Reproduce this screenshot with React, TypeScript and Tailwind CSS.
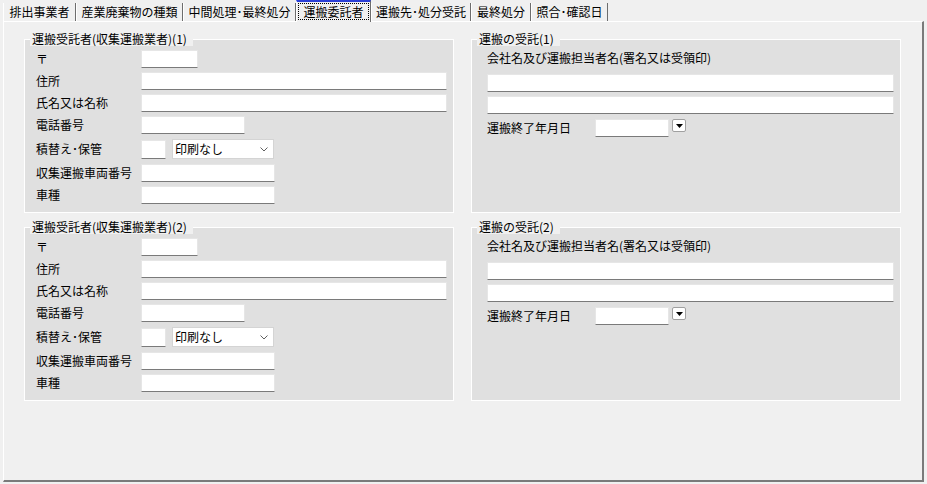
import React from "react";

const FONT = { fontFamily: '"Noto Sans CJK JP", "Noto Sans", sans-serif' };

function Field({ className }: { className: string }) {
  return <div className={"bg-white border border-[#e6e6e6] border-b-[#7a7a7a] " + className} />;
}

function Chevron() {
  return (
    <svg width="8" height="5" viewBox="0 0 8 5">
      <polyline points="0.5,0.5 4,4 7.5,0.5" fill="none" stroke="#606060" strokeWidth="1" />
    </svg>
  );
}

function GroupBox({ title, children }: { title: string; children: React.ReactNode }) {
  return (
    <div className="relative h-[174px] border border-white bg-[#e0e0e0]">
      <div className="absolute -top-[8px] left-[5px] bg-[#f0f0f0] pl-[2px] pr-[6px] text-[12px] leading-[14px] text-black whitespace-nowrap">
        {title}
      </div>
      {children}
    </div>
  );
}

function Row({ label, children, className }: { label: string; children: React.ReactNode; className: string }) {
  return (
    <div className={"flex items-center " + className}>
      <div className="w-[105px] text-[12px] leading-[14px] whitespace-nowrap">{label}</div>
      {children}
    </div>
  );
}

function LeftBox({ title }: { title: string }) {
  return (
    <GroupBox title={title}>
      <div className="flex flex-col pt-[10px] pl-[11px]">
        <Row label="〒" className="h-[18px]">
          <Field className="h-[18px] w-[57px]" />
        </Row>
        <Row label="住所" className="h-[18px] mt-[4px]">
          <Field className="h-[18px] w-[306px]" />
        </Row>
        <Row label="氏名又は名称" className="h-[18px] mt-[4px]">
          <Field className="h-[18px] w-[306px]" />
        </Row>
        <Row label="電話番号" className="h-[18px] mt-[4px]">
          <Field className="h-[18px] w-[104px]" />
        </Row>
        <Row label="積替え･保管" className="h-[20px] mt-[5px]">
          <Field className="h-[19px] w-[25px]" />
          <div className="ml-[6px] h-[20px] w-[102px] bg-white border border-[#d4d4d4] flex items-center justify-between pl-[2px] pr-[5px]">
            <span className="text-[12px] leading-[14px]">印刷なし</span>
            <Chevron />
          </div>
        </Row>
        <Row label="収集運搬車両番号" className="h-[18px] mt-[5px]">
          <Field className="h-[18px] w-[134px]" />
        </Row>
        <Row label="車種" className="h-[18px] mt-[4px]">
          <Field className="h-[18px] w-[134px]" />
        </Row>
      </div>
    </GroupBox>
  );
}

function RightBox({ title }: { title: string }) {
  return (
    <GroupBox title={title}>
      <div className="flex flex-col pt-[11px] pl-[15px]">
        <div className="text-[12px] leading-[14px] whitespace-nowrap">会社名及び運搬担当者名(署名又は受領印)</div>
        <Field className="mt-[9px] h-[18px] w-[407px]" />
        <Field className="mt-[4px] h-[18px] w-[407px]" />
        <div className="mt-[5px] flex items-start">
          <div className="w-[108px] h-[18px] flex items-center text-[12px] leading-[14px] whitespace-nowrap">運搬終了年月日</div>
          <Field className="h-[18px] w-[74px]" />
          <div className="ml-[3px] w-[14px] h-[13px] rounded-[2px] border border-[#a0a0a0] bg-white flex items-center justify-center">
            <svg width="7" height="4" viewBox="0 0 7 4">
              <polygon points="0,0 7,0 3.5,4" fill="#000" />
            </svg>
          </div>
        </div>
      </div>
    </GroupBox>
  );
}

function Tab({ label, className }: { label: string; className: string }) {
  return (
    <div className={"h-[18px] flex items-center justify-center border-l border-white border-r border-r-[#6d6d6d] text-[12px] leading-[14px] whitespace-nowrap " + className}>
      {label}
    </div>
  );
}

export default function App() {
  return (
    <div className="w-[927px] h-[484px] bg-[#f0f0f0] text-black overflow-hidden" style={FONT}>
      <div className="h-[21px] flex items-end pl-[3px] relative z-10">
        <Tab label="排出事業者" className="w-[73px]" />
        <Tab label="産業廃棄物の種類" className="w-[107px]" />
        <Tab label="中間処理･最終処分" className="w-[113px]" />
        <div className="relative h-[22px] -mb-[1px] w-[75px] bg-[#f0f0f0] border-l border-white border-r border-r-[#6d6d6d] border-t-2 border-t-[#2a3fd6] flex items-start justify-center pt-[1px]">
          <div className="h-[17px] w-[71px] border border-dotted border-black flex items-center justify-center text-[12px] leading-[14px] whitespace-nowrap">
            運搬委託者
          </div>
        </div>
        <Tab label="運搬先･処分受託" className="w-[100px]" />
        <Tab label="最終処分" className="w-[60px]" />
        <Tab label="照合･確認日" className="w-[77px]" />
      </div>
      <div className="ml-[3px] w-[921px] h-[461px] border-t border-l border-white border-r-2 border-b-2 border-r-[#7a7a7a] border-b-[#7a7a7a]">
        <div className="grid grid-cols-[430px_430px] gap-x-[17px] gap-y-[14px] pl-[20px] pt-[17px]">
          <LeftBox title="運搬受託者(収集運搬業者)(1)" />
          <RightBox title="運搬の受託(1)" />
          <LeftBox title="運搬受託者(収集運搬業者)(2)" />
          <RightBox title="運搬の受託(2)" />
        </div>
      </div>
    </div>
  );
}
